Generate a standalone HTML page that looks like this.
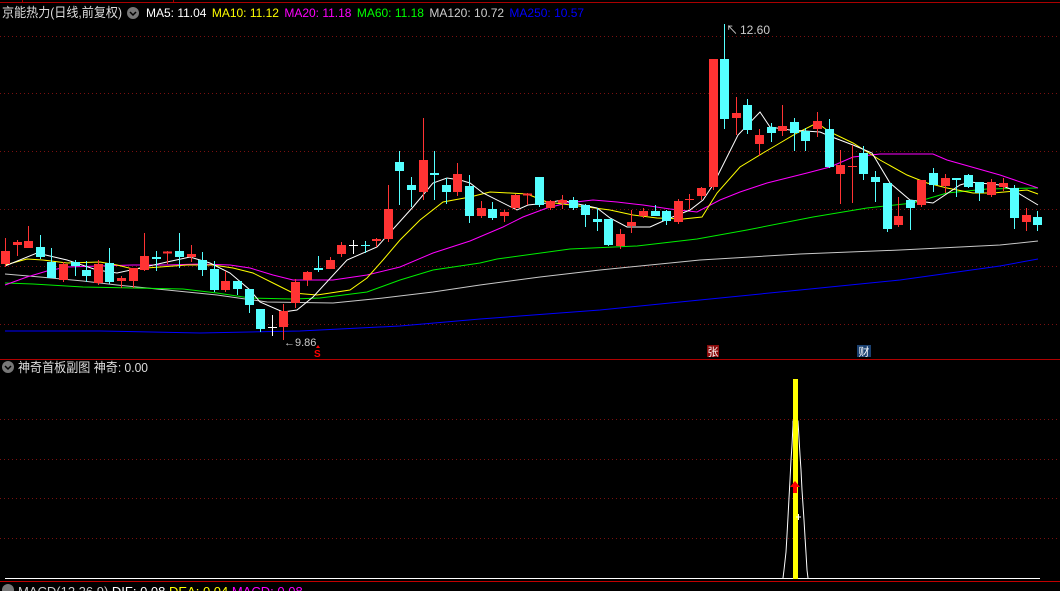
<!DOCTYPE html>
<html><head><meta charset="utf-8"><style>
html,body{margin:0;padding:0;background:#000;width:1060px;height:591px;overflow:hidden}
svg{display:block}
text{font-family:"Liberation Sans","Noto Sans CJK SC",sans-serif}
</style></head><body>
<svg id="s" width="1060" height="591" xmlns="http://www.w3.org/2000/svg">
<rect width="1060" height="591" fill="#000"/>
<g stroke="#7a1010" stroke-width="1" stroke-dasharray="1,3">
<line x1="0" y1="36.5" x2="1060" y2="36.5"/><line x1="0" y1="93.5" x2="1060" y2="93.5"/>
<line x1="0" y1="151.5" x2="1060" y2="151.5"/><line x1="0" y1="209.5" x2="1060" y2="209.5"/>
<line x1="0" y1="266.5" x2="1060" y2="266.5"/><line x1="0" y1="324.5" x2="1060" y2="324.5"/>
<line x1="0" y1="419.5" x2="1060" y2="419.5"/><line x1="0" y1="459.5" x2="1060" y2="459.5"/>
<line x1="0" y1="498.5" x2="1060" y2="498.5"/><line x1="0" y1="538.5" x2="1060" y2="538.5"/>
</g>
<line x1="0" y1="2.5" x2="1060" y2="2.5" stroke="#a00" />
<line x1="22.5" y1="0" x2="22.5" y2="3" stroke="#a00"/><line x1="173.5" y1="0" x2="173.5" y2="3" stroke="#a00"/>
<line x1="0" y1="359.5" x2="1060" y2="359.5" stroke="#b00000"/>
<line x1="0" y1="581.5" x2="1060" y2="581.5" stroke="#c00000"/>
<g id="ma" fill="none" stroke-width="1"></g>
<g id="c"></g>
<line x1="5" y1="578.5" x2="1040" y2="578.5" stroke="#fff"/>
<polyline fill="none" stroke="#fff" points="783,578 784,570 786,552 787,535 788,517 789,498 790,480 791,460 792,445 793,425 793,421 798,421 798,421 799,438 800,455 801,470 802,490 803,505 804,520 805,537 806,553 807,570 808,578" />
<rect x="793" y="379" width="5" height="200" fill="#ff0"/>
<polygon points="795,481 790,487 793,487 793,493 797,493 797,487 800,487" fill="#f00"/>
<line x1="796" y1="517" x2="801" y2="517" stroke="#fff"/><line x1="798.5" y1="514" x2="798.5" y2="520" stroke="#fff"/>
<text x="726" y="34" fill="#ccc" font-size="12">↖</text>
<text x="740" y="34" fill="#ccc" font-size="12">12.60</text>
<text x="284" y="346" fill="#ccc" font-size="11">←9.86</text>
<polygon points="318,345 316,348 320,348" fill="#f00"/>
<text x="314" y="357" fill="#f00" font-size="10" font-weight="bold">S</text>
<rect x="707" y="345" width="12" height="12" fill="#8a0b0b"/>
<text x="707.5" y="355.5" fill="#fff" font-size="11">张</text>
<rect x="857" y="345" width="14" height="12" fill="#1a4070"/>
<text x="858.5" y="355.5" fill="#fff" font-size="11">财</text>
<text x="2" y="17" font-size="13" fill="#ddd" textLength="120" lengthAdjust="spacingAndGlyphs">京能热力(日线,前复权)</text>
<circle cx="133" cy="13" r="6" fill="#777"/><path d="M130 12 L133 15 L136 12" stroke="#000" stroke-width="1.5" fill="none"/>
<text x="146" y="17" font-size="12"><tspan fill="#fff">MA5: 11.04 </tspan><tspan fill="#ff0" dx="2">MA10: 11.12 </tspan><tspan fill="#f0f" dx="2">MA20: 11.18 </tspan><tspan fill="#0f0" dx="2">MA60: 11.18 </tspan><tspan fill="#ccc" dx="2">MA120: 10.72 </tspan><tspan fill="#00f" dx="2">MA250: 10.57</tspan></text>
<circle cx="8" cy="367" r="6" fill="#777"/><path d="M5 366 L8 369 L11 366" stroke="#000" stroke-width="1.5" fill="none"/>
<text x="18" y="372" font-size="13" fill="#ddd" textLength="130" lengthAdjust="spacingAndGlyphs">神奇首板副图 神奇: 0.00</text>
<circle cx="8" cy="590" r="6" fill="#777"/>
<text x="18" y="596" font-size="13"><tspan fill="#ccc">MACD(12,26,9) </tspan><tspan fill="#fff">DIF: 0.08 </tspan><tspan fill="#ff0">DEA: 0.04 </tspan><tspan fill="#f0f">MACD: 0.08</tspan></text>
</svg>
<script>
var R='#ff3333',C='#55ffff',W='#ffffff';
var d=[
[R,251,264,238,267],[R,242,245,240,256],[R,241,248,226,248],[C,247,257,235,259],[C,262,278,248,278],
[R,264,280,262,282],[C,262,266,260,276],[C,270,276,261,282],[R,264,283,260,285],[C,263,282,248,284],
[R,278,281,276,288],[R,268,281,268,288],[R,256,270,233,271],[C,257,259,251,271],[R,252,253,251,264],
[C,251,257,233,268],[R,254,257,245,262],[C,260,270,252,276],[C,269,290,261,292],[R,281,290,271,292],
[C,281,289,281,295],[C,289,305,289,313],[C,309,329,309,332],[W,327,327,315,336],[R,311,327,304,340],
[R,282,303,279,308],[R,272,280,271,286],[C,268,270,256,272],[R,260,269,257,269],[R,245,254,242,257],
[W,245,245,240,254],[C,245,245,241,253],[R,239,241,238,247],[R,209,239,185,242],[C,162,171,151,205],
[C,185,190,177,207],[R,160,192,118,200],[C,173,175,151,200],[C,185,192,178,204],[R,174,192,163,196],
[C,186,216,175,223],[R,208,216,201,218],[C,209,218,202,220],[R,212,216,210,222],[R,195,208,194,210],
[R,194,195,193,205],[C,177,205,177,207],[R,201,208,200,210],[R,200,203,195,209],[C,200,208,197,210],
[C,205,215,204,227],[C,219,222,208,231],[C,219,245,219,246],[R,234,246,229,249],[R,222,226,210,233],
[R,211,216,208,218],[C,211,216,205,216],[C,211,221,210,225],[R,201,222,199,224],[R,199,199,194,209],
[R,188,196,187,200],[R,59,187,59,190],[C,59,119,24,129],[R,113,118,97,135],[C,105,130,99,134],
[R,135,144,129,156],[C,127,133,123,142],[R,126,131,105,136],[C,122,133,118,151],[C,131,141,128,151],
[R,121,129,112,137],[C,129,167,119,168],[R,165,174,150,204],[R,166,166,145,203],[C,153,174,146,180],
[C,177,182,171,202],[C,183,229,183,232],[R,216,225,197,227],[C,200,208,200,230],[R,180,205,180,207],
[C,173,185,168,192],[R,178,186,174,193],[C,178,180,178,197],[C,175,187,174,188],[C,182,193,182,201],
[R,182,195,179,197],[R,183,187,178,191],[C,188,218,185,229],[R,215,222,208,231],[C,217,225,211,231]
];
var g=document.getElementById('c'),h='';
d.forEach(function(k,i){
 var x=Math.round(5+11.6*i),col=k[0],t=k[1],b=k[2];
 var wc=(col==W)?'#fff':col;
 h+='<line x1="'+(x+0.5)+'" y1="'+k[3]+'" x2="'+(x+0.5)+'" y2="'+k[4]+'" stroke="'+wc+'"/>';
 if(b-t<1.5) h+='<line x1="'+(x-4)+'" y1="'+(t+0.5)+'" x2="'+(x+5)+'" y2="'+(t+0.5)+'" stroke="'+wc+'" stroke-width="'+(b-t+1)+'"/>';
 else h+='<rect x="'+(x-4)+'" y="'+t+'" width="9" height="'+(b-t)+'" fill="'+wc+'"/>';
});
g.innerHTML=h;
var ma=[
['#c8c8c8','5,274 40,277 83,281 117,285 167,290 217,295 267,302 333,303 383,298 433,292 480,285 540,277 600,270 700,260 800,254 900,250 1000,245 1038,241'],
['#0000ff','5,331 100,331 200,333 300,331 400,326 480,319 600,310 700,300 800,290 900,280 1000,266 1038,259'],
['#00ee00','5,283 33,284 83,287 133,288 183,289 217,293 250,298 293,299 320,298 367,292 400,280 433,270 480,263 497,259 570,249 637,246 697,239 747,230 813,217 867,208 913,203 947,193 987,189 1038,188'],
['#ff00ff','5,285 27,277 47,271 67,267 100,266 133,265 167,265 200,264 230,265 250,268 273,275 293,280 333,280 367,275 400,267 433,253 470,241 503,227 523,217 547,208 567,203 593,200 617,202 643,205 670,209 697,212 720,200 740,192 767,183 807,173 830,167 853,157 880,154 933,154 947,160 1000,175 1038,188'],
['#ffff00','5,265 27,259 43,260 67,263 100,262 117,265 133,269 160,267 187,265 213,265 233,268 253,273 273,283 293,293 317,295 350,290 367,278 383,260 400,240 420,220 443,202 470,197 490,192 510,193 527,194 547,202 563,204 587,207 610,210 633,215 657,218 683,219 702,217 717,193 740,167 763,153 780,143 797,133 817,123 830,132 853,143 880,160 907,175 927,183 947,188 973,193 993,193 1027,190 1038,194'],
['#ffffff','5,266 37,253 67,260 97,270 117,273 140,268 167,262 190,257 210,263 230,273 250,290 260,302 283,312 297,310 313,297 347,260 377,247 413,207 433,183 447,178 460,180 470,183 483,193 517,210 528,205 547,203 562,200 573,203 597,208 610,218 627,227 650,227 670,218 690,210 703,200 713,185 738,135 760,112 770,127 790,130 820,132 832,137 853,145 872,153 890,183 910,200 933,203 960,185 970,182 1000,185 1013,190 1038,205']
];
var mh='';ma.forEach(function(m){mh+='<polyline stroke="'+m[0]+'" points="'+m[1]+'"/>';});
document.getElementById('ma').innerHTML=mh;
</script>
</body></html>
